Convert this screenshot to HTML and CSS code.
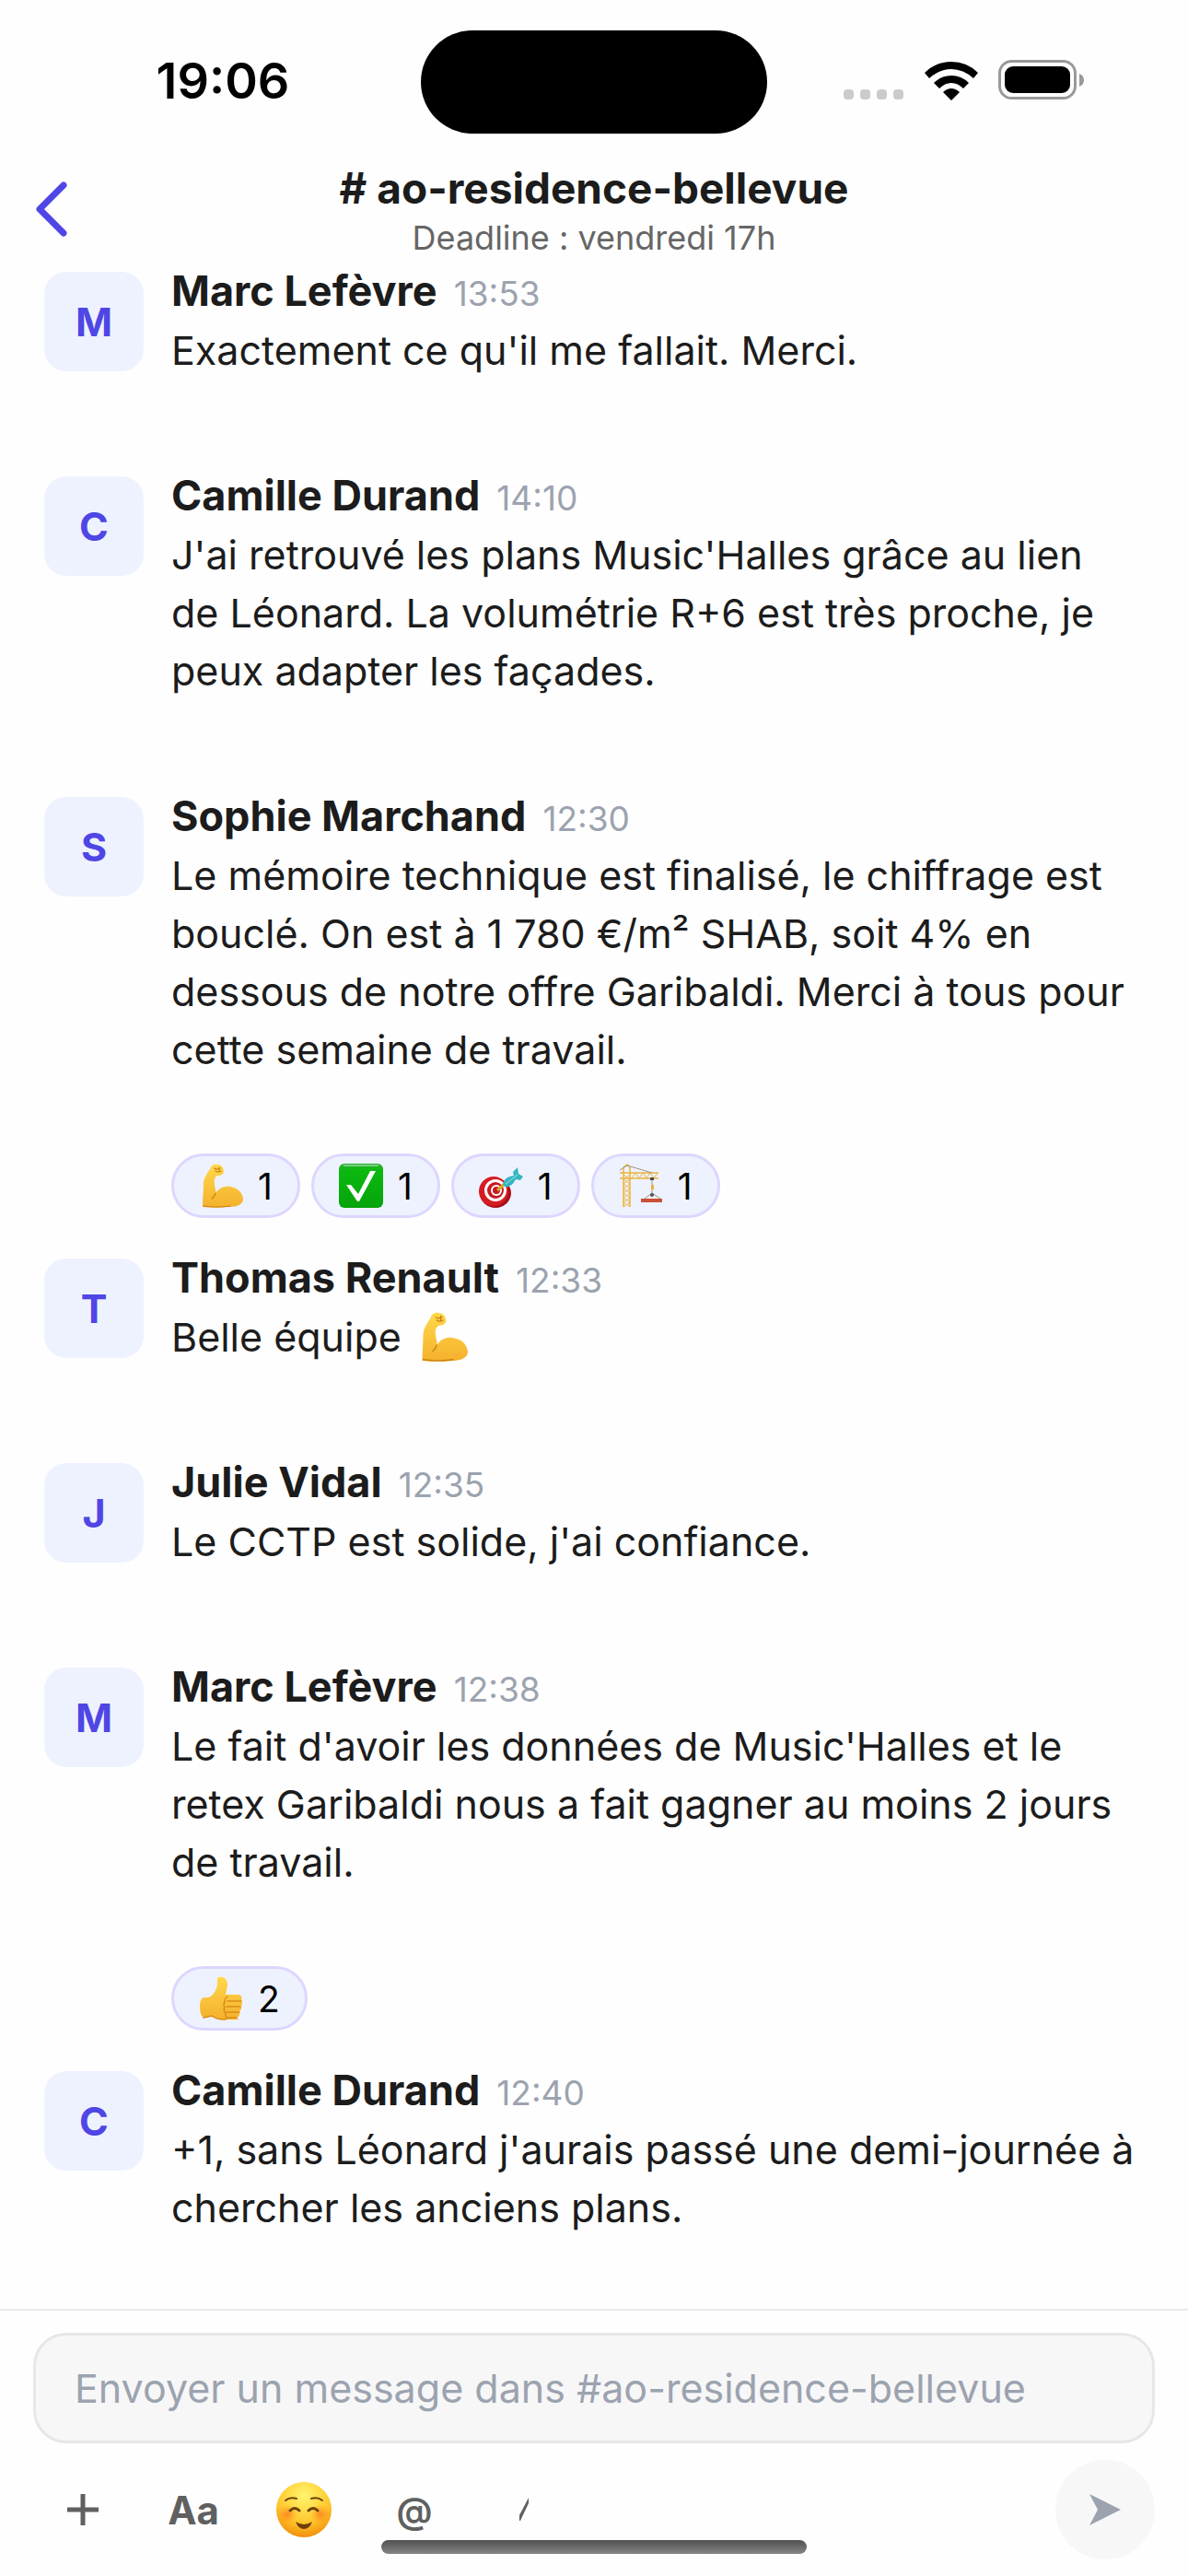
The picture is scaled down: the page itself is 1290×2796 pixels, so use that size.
FILE: index.html
```
<!DOCTYPE html>
<html lang="fr">
<head>
	<title># ao-residence-bellevue</title>
	<meta charset="utf-8">
	<meta name="viewport" content="width=device-width, initial-scale=1">
	<link rel="stylesheet" href="styles.css">
</head>
<body>
	<!-- emoji, used by the reactions and the toolbar -->
	<svg class="sprite" aria-hidden="true">
		<defs>
			<linearGradient id="skin" x1="0" y1="0" x2="0" y2="1">
				<stop offset="0" stop-color="#ffd84a"/>
				<stop offset="1" stop-color="#f5b02c"/>
			</linearGradient>
			<linearGradient id="green" x1="0" y1="0" x2="0" y2="1">
				<stop offset="0" stop-color="#2fae3a"/>
				<stop offset="0.15" stop-color="#0cb90f"/>
				<stop offset="1" stop-color="#05a30b"/>
			</linearGradient>
			<radialGradient id="face" cx="0.5" cy="0.25" r="0.78">
				<stop offset="0" stop-color="#fff56f"/>
				<stop offset="0.6" stop-color="#ffc92e"/>
				<stop offset="1" stop-color="#f08a06"/>
			</radialGradient>
			<radialGradient id="cheek">
				<stop offset="0" stop-color="#ff6a1a" stop-opacity="0.7"/>
				<stop offset="1" stop-color="#ff8a1a" stop-opacity="0"/>
			</radialGradient>
		</defs>
		<symbol id="biceps" viewBox="0 0 48 48">
			<path fill="url(#skin)" d="M4 47C4 38 5 29 5 20C6 15 9 10 12 6C13 2 16 0 20 1C24 1 26 3 27 8C27 11 25 13 20 13C17 15 16 18 17 22C17 26 19 29 18 32C22 26 28 24 34 25C42 26 47 31 48 38C48 44 42 47 33 47C24 48 13 48 4 47Z"/>
			<path fill="none" stroke="#c98212" stroke-width="1.2" stroke-linecap="round" d="M17 5q2 2 6 0M18 8q3 2 6 0M22 4v5M18 32q-1 4-4 6M5 46q15 2 29 0"/>
		</symbol>
		<symbol id="check" viewBox="0 0 48 48">
			<rect x="0" y="0" width="48" height="48" rx="6" fill="url(#green)"/>
			<path fill="none" stroke="#8fdc95" stroke-width="1.5" d="M5 2h38"/>
			<path fill="#fff" d="M8 23h5l8 10L34 8h6L22 41h-2Z"/>
		</symbol>
		<symbol id="dart" viewBox="0 0 48 48">
			<ellipse cx="18" cy="32" rx="17" ry="16" fill="#a90f18"/>
			<ellipse cx="16" cy="30" rx="16" ry="16" fill="#d61c23"/>
			<ellipse cx="18" cy="29" rx="12" ry="12" fill="#fff"/>
			<ellipse cx="18" cy="29" rx="9" ry="9" fill="#c91920"/>
			<ellipse cx="19" cy="29" rx="6" ry="6" fill="#fff"/>
			<ellipse cx="19" cy="29" rx="4" ry="4" fill="#c91920"/>
			<path stroke="#d6a62a" stroke-width="3" d="M20 29l8-7"/>
			<path fill="#35b6c2" d="M26 22Q28 14 38 13L37 9L42 4L43 11L48 14L45 18L40 17Q36 25 29 26Z"/>
			<path stroke="#9be5e8" stroke-width="1" d="M29 22l13-10"/>
		</symbol>
		<symbol id="crane" viewBox="0 0 48 48">
			<g fill="none" stroke="#edb43e" stroke-width="1.5">
				<path d="M5 47V4M12 47V4M1 10h42M1 16h42M5 4l4-3 3 3"/>
				<path stroke-width="1" d="M5 47l7-5-7-5 7-5-7-5 7-5-7-5 7-5M12 47l-7-5 7-5-7-5 7-5-7-5 7-5-7-5M14 16l4-6 4 6 4-6 4 6 4-6 4 6 4-6"/>
			</g>
			<path fill="none" stroke="#9c9482" stroke-width="1" d="M1 7l8-5 27 8M36 17v15l-8 6M36 32l9 6"/>
			<circle cx="36" cy="34" r="2" fill="#555"/>
			<path fill="#ca5135" d="M24 38h23v4H24Z"/>
			<path fill="#47494d" d="M34 15h4v3h-4Z"/>
			<path fill="#edb43e" d="M35 23h3v5h-3Z"/>
		</symbol>
		<symbol id="thumb" viewBox="0 0 48 48">
			<path fill="url(#skin)" d="M20 2Q22 0 26 1Q31 3 31 10L29 20H43Q48 21 46 26Q48 29 46 32Q47 36 44 38Q45 43 41 45L43 47H26Q18 46 14 43L5 45Q1 42 1 33Q1 24 5 23Q11 24 15 20Q20 14 20 8Z"/>
			<path fill="none" stroke="#d98d16" stroke-width="1.5" stroke-linecap="round" d="M31 27h15M30 33h15M30 39h14M30 45h11M31 22q-4 3-3 6-2 3 0 6-2 3 1 6-1 4 2 6M5 45l9-2q5 4 15 4"/>
		</symbol>
		<symbol id="blush" viewBox="0 0 60 60">
			<circle cx="30" cy="30" r="30" fill="url(#face)"/>
			<circle cx="12" cy="35" r="11" fill="url(#cheek)"/>
			<circle cx="48" cy="35" r="11" fill="url(#cheek)"/>
			<g fill="none" stroke="#70400b" stroke-width="2" stroke-linecap="round">
				<path d="M10 20q5-4 12-2M38 18q7-2 12 2"/>
				<path stroke-width="3" d="M15 31q5-5 10 0M35 31q5-5 10 0"/>
			</g>
			<path fill="#70400b" d="M21 43q9 6 18 0q-3 8-9 8t-9-8Z"/>
		</symbol>
	</svg>

	<div class="app">
		<div class="status">
			<time class="clock">19:06</time>
			<div class="island"></div>
			<div class="indicators">
				<svg class="signal" viewBox="0 0 66 12" fill="#cbcbcb">
					<rect width="11" height="11" rx="4"/>
					<rect x="18" width="11" height="11" rx="4"/>
					<rect x="36" width="11" height="11" rx="4"/>
					<rect x="54" width="11" height="11" rx="4"/>
				</svg>
				<svg class="wifi" viewBox="0 0 58 42">
					<path d="M0 12Q12 0 29 0T58 12L53 18Q42 8 29 8T5 18ZM10 23Q18 15 29 15T48 23L42 29Q36 23 29 23T16 29ZM20 33Q29 25 38 33L29 42Z"/>
				</svg>
				<svg class="battery" viewBox="0 0 94 44">
					<rect x="1.5" y="1.5" width="82" height="40" rx="13" fill="none" stroke="#999" stroke-width="3"/>
					<rect x="7" y="7" width="71" height="29" rx="9"/>
					<path fill="#999" d="M88 15q5 2 5 7t-5 7Z"/>
				</svg>
			</div>
		</div>

		<header class="header">
			<button class="back" aria-label="Retour">
				<svg viewBox="0 0 36 60"><path d="M31 4L5 30L31 56"/></svg>
			</button>
			<div class="heading">
				<h1># ao-residence-bellevue</h1>
				<p>Deadline : vendredi 17h</p>
			</div>
		</header>

		<main class="messages">
			<article class="message">
				<div class="avatar">M</div>
				<div class="body">
					<div class="meta"><h2>Marc Lefèvre</h2><time>13:53</time></div>
					<p>Exactement ce qu'il me fallait. Merci.</p>
				</div>
			</article>
			<article class="message">
				<div class="avatar">C</div>
				<div class="body">
					<div class="meta"><h2>Camille Durand</h2><time>14:10</time></div>
					<p>J'ai retrouvé les plans Music'Halles grâce au lien de Léonard. La volumétrie R+6 est très proche, je peux adapter les façades.</p>
				</div>
			</article>
			<article class="message">
				<div class="avatar">S</div>
				<div class="body">
					<div class="meta"><h2>Sophie Marchand</h2><time>12:30</time></div>
					<p>Le mémoire technique est finalisé, le chiffrage est bouclé. On est à 1 780 €/m² SHAB, soit 4% en dessous de notre offre Garibaldi. Merci à tous pour cette semaine de travail.</p>
					<div class="reactions">
						<button><svg><use href="#biceps"/></svg>1</button>
						<button><svg><use href="#check"/></svg>1</button>
						<button><svg><use href="#dart"/></svg>1</button>
						<button><svg><use href="#crane"/></svg>1</button>
					</div>
				</div>
			</article>
			<article class="message">
				<div class="avatar">T</div>
				<div class="body">
					<div class="meta"><h2>Thomas Renault</h2><time>12:33</time></div>
					<p>Belle équipe <svg class="emoji"><use href="#biceps"/></svg></p>
				</div>
			</article>
			<article class="message">
				<div class="avatar">J</div>
				<div class="body">
					<div class="meta"><h2>Julie Vidal</h2><time>12:35</time></div>
					<p>Le CCTP est solide, j'ai confiance.</p>
				</div>
			</article>
			<article class="message">
				<div class="avatar">M</div>
				<div class="body">
					<div class="meta"><h2>Marc Lefèvre</h2><time>12:38</time></div>
					<p>Le fait d'avoir les données de Music'Halles et le retex Garibaldi nous a fait gagner au moins 2 jours de travail.</p>
					<div class="reactions">
						<button><svg><use href="#thumb"/></svg>2</button>
					</div>
				</div>
			</article>
			<article class="message">
				<div class="avatar">C</div>
				<div class="body">
					<div class="meta"><h2>Camille Durand</h2><time>12:40</time></div>
					<p>+1, sans Léonard j'aurais passé une demi-journée à chercher les anciens plans.</p>
				</div>
			</article>
		</main>

		<form class="composer">
			<input type="text" aria-label="Message" placeholder="Envoyer un message dans #ao-residence-bellevue">
			<div class="tools">
				<button type="button" aria-label="Ajouter">
					<svg class="plus" viewBox="0 0 36 36"><path d="M18 1v34M1 18h34"/></svg>
				</button>
				<button type="button">Aa</button>
				<button type="button" aria-label="Emoji"><svg class="smile"><use href="#blush"/></svg></button>
				<button type="button" class="at">@</button>
				<button type="button" aria-label="Commandes">
					<svg class="slash" viewBox="0 0 12 26"><path d="M0 19L10 0V6L1 25H0Z"/></svg>
				</button>
				<button type="button" class="send" aria-label="Envoyer">
					<svg viewBox="0 0 34 34"><path d="M0 0L34 17L0 34L9 17Z"/></svg>
				</button>
			</div>
		</form>
		<div class="home-bar"></div>
	</div>
</body>
</html>
```
FILE: styles.css
```
* {
	box-sizing: border-box;
}

body {
	margin: 0;
	background: #fefefe;
	color: #1c1c1c;
	font-family: Inter, "Liberation Sans", sans-serif;
	font-size: 43px;
}

h1, h2, p {
	margin: 0;
}

button {
	border: 0;
	padding: 0;
	background: none;
	font-family: inherit;
	cursor: pointer;
}

.sprite {
	position: absolute;
	width: 0;
	height: 0;
}

.app {
	position: relative;
	display: flex;
	flex-direction: column;
	min-height: 100vh;
}

/* status bar */
.status {
	display: grid;
	grid-template-columns: 1fr 376px 1fr;
	align-items: center;
	padding-top: 33px;
	color: #000;
}

.clock {
	justify-self: center;
	padding: 0 0 4px 27px;
	font-size: 54px;
	font-weight: 600;
}

.island {
	height: 112px;
	border-radius: 56px;
	background: #000;
}

.indicators {
	display: flex;
	align-items: flex-end;
	justify-content: flex-end;
	padding: 0 112px 4px 0;
}

.signal {
	width: 66px;
	height: 12px;
	margin-right: 22px;
}

.wifi {
	width: 58px;
	height: 42px;
	margin-right: 22px;
}

.battery {
	width: 94px;
	height: 44px;
}

/* channel header */
.header {
	display: grid;
	grid-template-columns: 120px 1fr 120px;
	align-items: center;
	padding: 28px 0 14px;
}

.back {
	padding-left: 38px;
	text-align: left;
}

.back svg {
	display: block;
	width: 36px;
	height: 60px;
	fill: none;
	stroke: #4f46e5;
	stroke-width: 7;
	stroke-linecap: round;
	stroke-linejoin: round;
}

.heading {
	text-align: center;
}

.heading h1 {
	font-size: 46px;
	font-weight: 700;
	line-height: 63px;
}

.heading p {
	color: #666;
	font-size: 36px;
	line-height: 45px;
}

/* messages */
.messages {
	flex: 1;
	padding: 0 54px 0 48px;
}

.message {
	display: flex;
	gap: 30px;
	margin-bottom: 44px;
}

.message:last-child {
	margin-bottom: 0;
}

.avatar {
	flex: none;
	display: flex;
	align-items: center;
	justify-content: center;
	width: 108px;
	height: 108px;
	border-radius: 24px;
	background: #eef2ff;
	color: #4f46e5;
	font-weight: 700;
}

.body {
	flex: 1;
}

.meta {
	display: flex;
	align-items: baseline;
	gap: 18px;
	margin-bottom: 12px;
	line-height: 42px;
}

.meta h2 {
	font-size: 45px;
	font-weight: 700;
}

.meta time {
	color: #9ca3af;
	font-size: 37px;
	line-height: 36px;
}

.body p {
	margin-bottom: 61px;
	line-height: 63px;
}

.emoji {
	width: 54px;
	height: 54px;
	margin-left: 6px;
	vertical-align: -11px;
}

.reactions {
	display: flex;
	gap: 12px;
	margin-top: 81px;
}

.body p:has(+ .reactions) {
	margin-bottom: 0;
}

.reactions button {
	display: flex;
	align-items: center;
	gap: 16px;
	height: 70px;
	padding: 0 27px;
	border: 3px solid #ddd6fe;
	border-radius: 36px;
	background: #eef2ff;
	color: #000;
	font-size: 39px;
}

.reactions svg {
	width: 48px;
	height: 48px;
}

/* composer */
.composer {
	padding: 24px 36px 18px;
	border-top: 2px solid #ebebeb;
}

.composer input {
	display: block;
	width: 100%;
	height: 120px;
	padding: 0 42px;
	border: 3px solid #e5e7e8;
	border-radius: 36px;
	background: #f7f7f8;
	font-family: inherit;
	font-size: 43px;
}

.composer input::placeholder {
	color: #9ca3af;
	opacity: 1;
}

.tools {
	display: flex;
	gap: 12px;
	margin-top: 18px;
}

.tools button {
	display: flex;
	align-items: center;
	justify-content: center;
	width: 108px;
	height: 108px;
	color: #606060;
	font-size: 42px;
	font-weight: 700;
}

.tools .at {
	font-size: 39px;
	font-weight: 600;
}

.plus {
	width: 36px;
	height: 36px;
	stroke: #606060;
	stroke-width: 5;
}

.smile {
	width: 60px;
	height: 60px;
}

.slash {
	width: 12px;
	height: 26px;
	fill: #606060;
}

.tools .send {
	margin-left: auto;
	border-radius: 50%;
	background: #f7f7f8;
}

.send svg {
	width: 34px;
	height: 34px;
	fill: #9ca3af;
}

/* lies over the toolbar */
.home-bar {
	position: absolute;
	bottom: 24px;
	left: 50%;
	width: 462px;
	height: 15px;
	margin-left: -231px;
	border-radius: 8px;
	background: linear-gradient(#505050, #858585);
}
```
